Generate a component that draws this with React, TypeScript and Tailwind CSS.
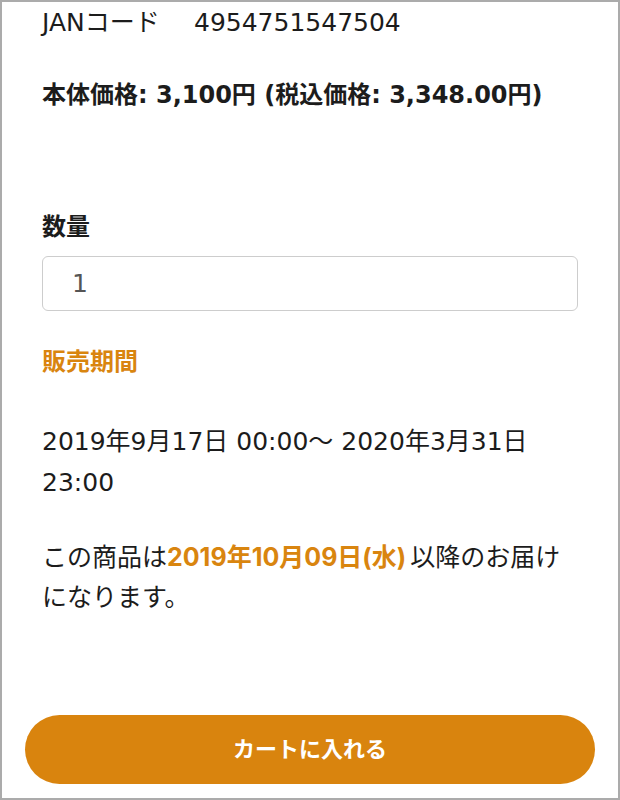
import { useState } from "react"

const font = "font-['DejaVu_Sans','Noto_Sans_CJK_JP',sans-serif]"

export default function App() {
  const [qty, setQty] = useState("1")

  return (
    <div className={`w-[620px] h-[800px] bg-white border-2 border-[#ababab] text-[#1c1c1c] ${font}`}>
      <div className="px-[40px]">
        <div className="flex text-[25px] leading-[41px]">
          <span className="w-[152px]">JANコード</span>
          <span>4954751547504</span>
        </div>

        <p className="mt-[32px] text-[24px] leading-[41px] font-bold">
          本体価格: 3,100円 (税込価格: 3,348.00円)
        </p>

        <div className="mt-[91px]">
          <label className="block text-[24px] leading-[41px] font-bold">
            数量
          </label>
          <input
            value={qty}
            onChange={(e) => setQty(e.target.value)}
            className="mt-[8px] w-full h-[55px] pl-[29px] border border-[#cdcdcd] rounded-[6px] text-[25px] text-[#555] outline-none"
          />
        </div>

        <h3 className="mt-[31px] text-[24px] leading-[41px] font-bold text-[#d9850f]">
          販売期間
        </h3>

        <p className="mt-[38px] text-[25px] leading-[41px]">
          2019年9月17日 00:00〜 2020年3月31日 23:00
        </p>

        <p className="mt-[34px] text-[25px] leading-[40px]">
          この商品は
          <span className="font-bold text-[#d9850f] font-['Inter','Noto_Sans_CJK_JP',sans-serif]">
            2019年10月09日(水)
          </span>
          <span className="ml-[4px]">以降のお届けになります。</span>
        </p>
      </div>

      <div className="px-[23px] mt-[97px]">
        <button className="w-full h-[69px] rounded-full bg-[#d9840e] text-white text-[22px] font-bold">
          カートに入れる
        </button>
      </div>
    </div>
  )
}
